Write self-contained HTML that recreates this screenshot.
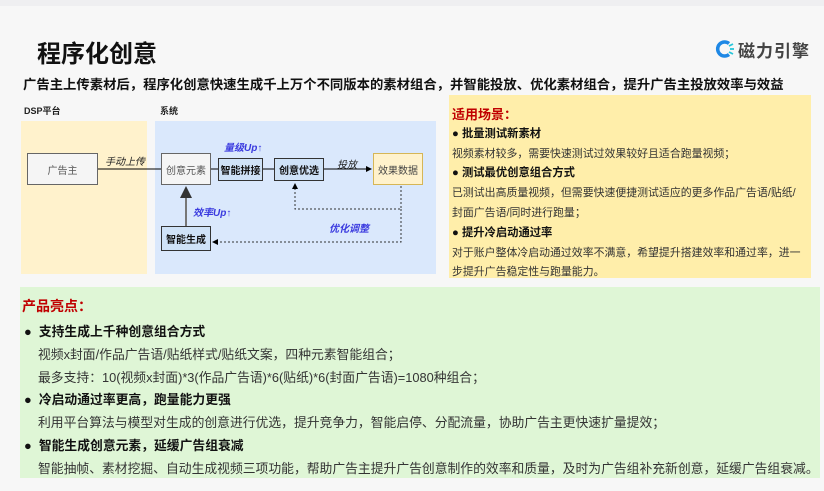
<!DOCTYPE html>
<html><head><meta charset="utf-8"><style>
*{margin:0;padding:0;box-sizing:border-box}
body{width:824px;height:491px;background:#f7f7f7;font-family:"Liberation Sans","Noto Sans CJK SC",sans-serif;position:relative;overflow:hidden;color:#222}
.a{position:absolute;white-space:nowrap}
.top{position:absolute;left:0;top:0;width:824px;height:6px;background:#efeff1}
.box{position:absolute;display:flex;align-items:center;justify-content:center;font-size:10px;white-space:nowrap}
.g{background:#f5f5f5;border:1px solid #666;color:#555}
.b{background:#cfe2f7;border:1px solid #333;color:#111;font-weight:bold}
.lbl{position:absolute;font-size:10px;font-style:italic;white-space:nowrap}
.blue{color:#3a3adf;font-weight:bold}
.r p{position:absolute;left:452px;font-size:10.9px;color:#333;white-space:nowrap}
.r p.h{font-weight:bold;color:#111;font-size:11.3px}
.gr p{position:absolute;font-size:12.8px;white-space:nowrap;color:#333}
.gr p.h{left:24px;font-weight:bold;color:#111}
.gr p.t{left:38px}
</style></head><body>
<div class="top"></div>
<div class="a" style="left:37px;top:34px;font-size:24px;font-weight:bold;color:#111">程序化创意</div>
<div class="a" style="left:714px;top:38px;width:20px;height:20px;">
<svg width="22" height="22" viewBox="0 0 22 22"><path d="M15 5.5A7 7 0 1 0 15 16.5" fill="none" stroke="#1e88e5" stroke-width="3.5"/><g stroke="#26c6da" stroke-width="1.8"><line x1="15" y1="8" x2="19" y2="6"/><line x1="16" y1="11" x2="20" y2="11"/><line x1="15" y1="14" x2="19" y2="16"/></g></svg></div>
<div class="a" style="left:738px;top:37px;font-size:17px;color:#444;font-weight:bold;letter-spacing:1px">磁力引擎</div>
<div class="a" style="left:23px;top:74px;font-size:13.35px;font-weight:bold;color:#111">广告主上传素材后，程序化创意快速生成千上万个不同版本的素材组合，并智能投放、优化素材组合，提升广告主投放效率与效益</div>

<div class="a" style="left:24px;top:104px;font-size:9px;font-weight:bold">DSP平台</div>
<div class="a" style="left:160px;top:104px;font-size:9px;font-weight:bold">系统</div>
<div class="a" style="left:21px;top:121px;width:126px;height:153px;background:#fff2cc"></div>
<div class="a" style="left:155px;top:121px;width:281px;height:153px;background:#dae8fc"></div>
<svg class="a" style="left:0;top:0" width="450" height="280">
<defs><marker id="m" markerWidth="6" markerHeight="6" refX="5" refY="3" orient="auto"><path d="M0,0L6,3L0,6z" fill="#000"/></marker>
<marker id="m2" markerWidth="6" markerHeight="6" refX="5" refY="3" orient="auto"><path d="M0,0L6,3L0,6z" fill="#333"/></marker></defs>
<line x1="98" y1="169" x2="161" y2="169" stroke="#000"/>
<line x1="210" y1="169" x2="218" y2="169" stroke="#000"/>
<line x1="263" y1="169" x2="274" y2="169" stroke="#000"/>
<line x1="323" y1="169" x2="371" y2="169" stroke="#000" marker-end="url(#m)"/>
<line x1="186" y1="226" x2="186" y2="188" stroke="#777" stroke-width="2" marker-end="url(#m2)"/>
<polyline points="401,186 401,209 295,209 295,184" fill="none" stroke="#333" stroke-dasharray="2,2" marker-end="url(#m)"/>
<polyline points="401,209 401,242 213,242" fill="none" stroke="#333" stroke-dasharray="2,2" marker-end="url(#m)"/>
</svg>
<div class="box g" style="left:27px;top:153px;width:71px;height:32px">广告主</div>
<div class="box g" style="left:161px;top:153px;width:50px;height:32px">创意元素</div>
<div class="box b" style="left:218px;top:158px;width:45px;height:23px">智能拼接</div>
<div class="box b" style="left:274px;top:158px;width:50px;height:23px">创意优选</div>
<div class="box" style="left:373px;top:153px;width:50px;height:32px;background:#fff2cc;border:1px solid #d6b656;color:#444">效果数据</div>
<div class="box b" style="left:161px;top:226px;width:50px;height:25px">智能生成</div>
<div class="lbl" style="left:105px;top:153px">手动上传</div>
<div class="lbl blue" style="left:224px;top:139px">量级Up↑</div>
<div class="lbl" style="left:337px;top:156px">投放</div>
<div class="lbl blue" style="left:193px;top:204px">效率Up↑</div>
<div class="lbl blue" style="left:329px;top:220px">优化调整</div>

<div class="a" style="left:449px;top:95px;width:362px;height:183px;background:#ffeeaa"></div>
<div class="r">
<p class="h" style="top:104px;font-size:13px;color:#c00000">适用场景：</p>
<p class="h" style="top:125px">● 批量测试新素材</p>
<p style="top:145px">视频素材较多，需要快速测试过效果较好且适合跑量视频；</p>
<p class="h" style="top:164px">● 测试最优创意组合方式</p>
<p style="top:184px">已测试出高质量视频，但需要快速便捷测试适应的更多作品广告语/贴纸/</p>
<p style="top:204px">封面广告语/同时进行跑量；</p>
<p class="h" style="top:224px">● 提升冷启动通过率</p>
<p style="top:244px">对于账户整体冷启动通过效率不满意，希望提升搭建效率和通过率，进一</p>
<p style="top:263px">步提升广告稳定性与跑量能力。</p>
</div>

<div class="a" style="left:20px;top:287px;width:800px;height:191px;background:#dff6d6"></div>
<div class="gr">
<p style="left:22px;top:296px;font-weight:bold;font-size:14px;color:#c00000">产品亮点：</p>
<p class="h" style="top:321px">●&nbsp; 支持生成上千种创意组合方式</p>
<p class="t" style="top:344px">视频x封面/作品广告语/贴纸样式/贴纸文案，四种元素智能组合；</p>
<p class="t" style="top:367px">最多支持：10(视频x封面)*3(作品广告语)*6(贴纸)*6(封面广告语)=1080种组合；</p>
<p class="h" style="top:389px">●&nbsp; 冷启动通过率更高，跑量能力更强</p>
<p class="t" style="top:412px">利用平台算法与模型对生成的创意进行优选，提升竞争力，智能启停、分配流量，协助广告主更快速扩量提效；</p>
<p class="h" style="top:435px">●&nbsp; 智能生成创意元素，延缓广告组衰减</p>
<p class="t" style="top:458px">智能抽帧、素材挖掘、自动生成视频三项功能，帮助广告主提升广告创意制作的效率和质量，及时为广告组补充新创意，延缓广告组衰减。</p>
</div>
</body></html>
